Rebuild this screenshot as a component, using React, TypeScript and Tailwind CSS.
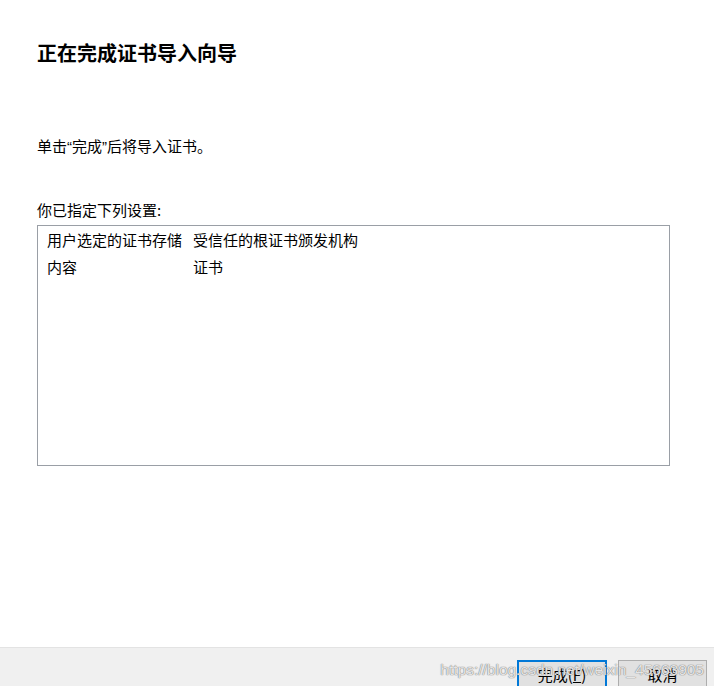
const FONT = "font-['Microsoft_YaHei_UI','Noto_Sans_CJK_SC',sans-serif]";
const LATIN = "font-['Liberation_Sans',sans-serif]";

const SETTINGS = [
  { label: "用户选定的证书存储", value: "受信任的根证书颁发机构" },
  { label: "内容", value: "证书" },
];

export default function App() {
  return (
    <div className={`${FONT} relative flex h-[686px] w-[714px] flex-col overflow-hidden bg-white text-black`}>
      <div className="flex flex-1 flex-col px-[37px]">
        {/* Header */}
        <h1 className="mt-[39px] text-[20px] font-bold leading-[28px]">
          正在完成证书导入向导
        </h1>

        <p className="mt-[69px] text-[15px] leading-[20px]">
          单击<span className={LATIN}>“</span>完成<span className={LATIN}>”</span>后将导入证书。
        </p>

        <p className="mt-[43px] text-[15px] leading-[20px]">你已指定下列设置:</p>

        {/* Settings list */}
        <div className="mt-[5px] h-[241px] w-[633px] border border-[#9a9fa6] px-[9px] pt-[1px]">
          {SETTINGS.map((row) => (
            <div key={row.label} className="flex h-[27px] items-center text-[15px]">
              <span className="w-[146px] whitespace-nowrap">{row.label}</span>
              <span className="whitespace-nowrap">{row.value}</span>
            </div>
          ))}
        </div>
      </div>

      {/* Footer */}
      <div className="flex h-[39px] items-start justify-end gap-[11px] border-t border-[#e3e3e3] bg-[#f0f0f0] pr-[7px] pt-[12px]">
        <button className="h-[30px] w-[90px] border-2 border-[#0078d7] bg-[#e1e1e1] text-[15px]">
          完成(<span className="underline">F</span>)
        </button>
        <button className="h-[30px] w-[89px] border border-[#adadad] bg-[#e1e1e1] text-[15px]">
          取消
        </button>
      </div>

      {/* Watermark */}
      <div className={`${LATIN} pointer-events-none absolute bottom-[5px] right-[10px] text-[15.5px] text-white/80 [text-shadow:0_0_1px_#777,0_0_1px_#777]`}>
        https://blog.csdn.net/weixin_45663905
      </div>
    </div>
  );
}
